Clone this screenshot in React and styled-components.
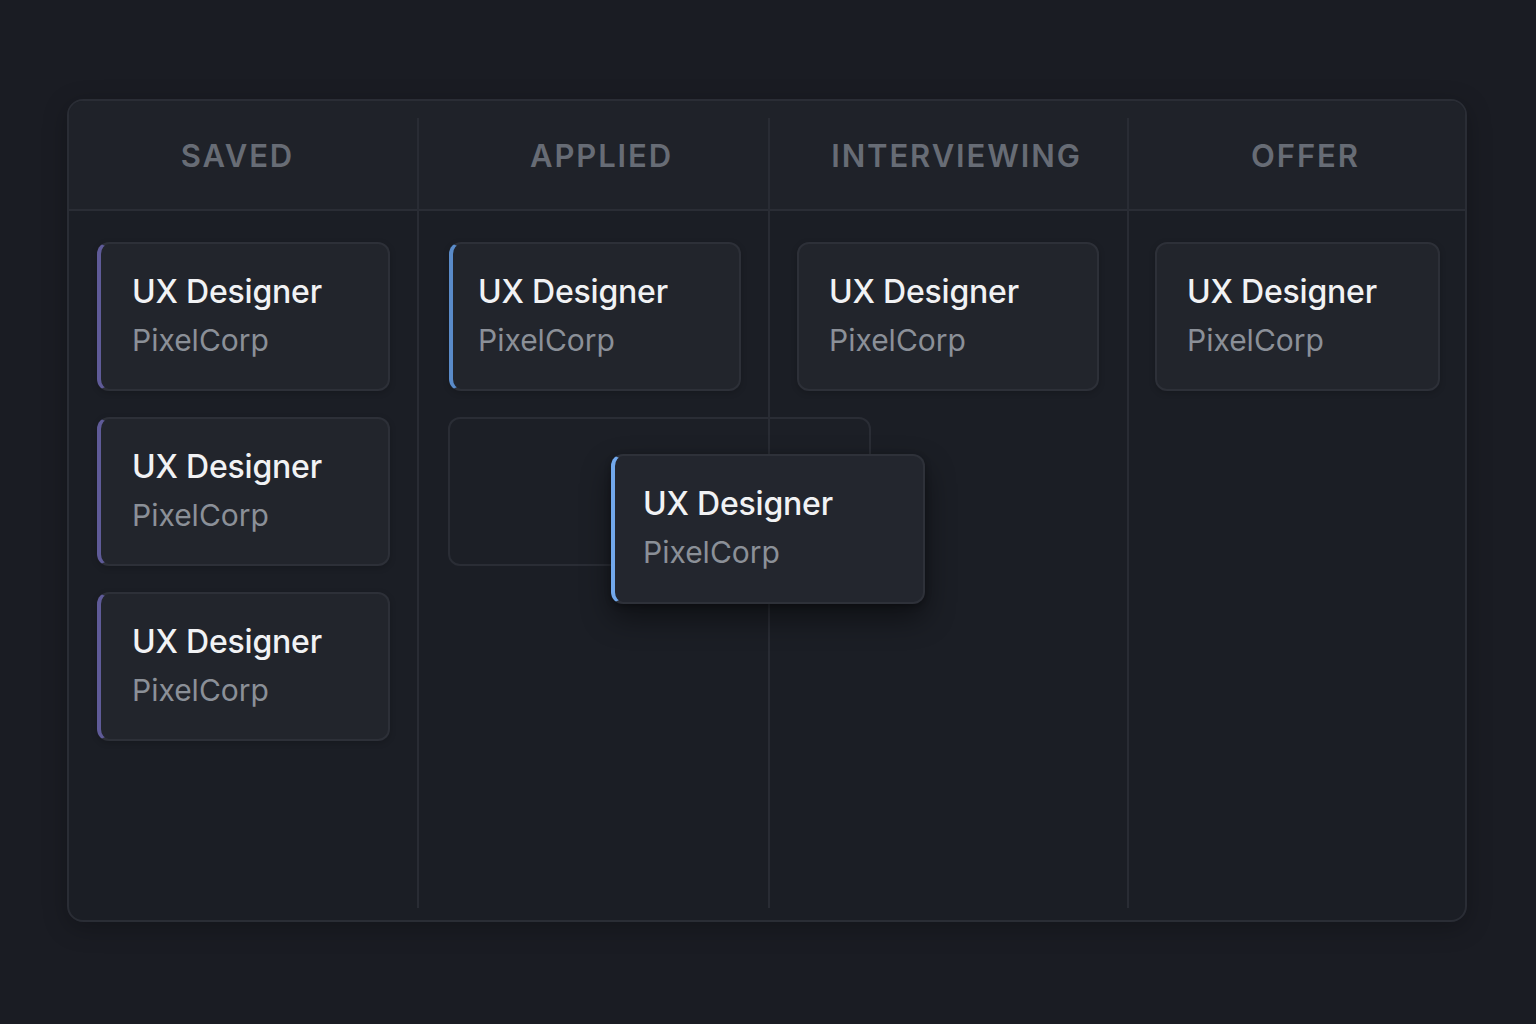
import React from 'react';
import styled, { createGlobalStyle } from 'styled-components';

const GlobalStyle = createGlobalStyle`
  html, body {
    margin: 0;
    padding: 0;
    background: #1a1c23;
  }
  body {
    font-family: Inter, "Noto Sans", "Liberation Sans", sans-serif;
    -webkit-font-smoothing: antialiased;
  }
  * { box-sizing: border-box; }
`;

const Page = styled.main`
  width: 1536px;
  height: 1024px;
  padding: 99px 0 0 67px;
`;

const Board = styled.section`
  position: relative;
  width: 1400px;
  height: 823px;
  display: grid;
  grid-template-columns: 349px 351px 359px 1fr;
  background: #1b1e25;
  border: 2px solid #2a2d35;
  border-radius: 16px;
  box-shadow: 0 6px 24px rgba(0, 0, 0, 0.25);
`;

const Column = styled.div`
  position: relative;
  display: flex;
  flex-direction: column;
  min-width: 0;

  /* column divider, stops short of the board edges */
  &::before {
    content: '';
    display: ${p => (p.$first ? 'none' : 'block')};
    position: absolute;
    left: -1px;
    top: 17px;
    bottom: 12px;
    width: 2px;
    background: #292c34;
  }
`;

const ColumnHeader = styled.header`
  height: 110px;
  display: flex;
  align-items: center;
  justify-content: center;
  padding: 0 ${p => p.$padRight || 0}px 0 ${p => p.$padLeft || 0}px;
  background: #1f2229;
  border-bottom: 2px solid #2a2d35;
  border-radius: ${p => p.$radius || '0'};
  color: #676c75;
  font-size: 31px;
  font-weight: 600;
  letter-spacing: 1.9px;
  text-transform: uppercase;
`;

const ColumnBody = styled.div`
  flex: 1;
  display: flex;
  flex-direction: column;
  gap: 26px;
  padding: 31px ${p => p.$right || 28}px 0 ${p => p.$left || 28}px;
`;

const Card = styled.article`
  position: relative;
  z-index: 1;
  height: 149px;
  padding: 28px 0 0 ${p => p.$pad || 30}px;
  background: #22252c;
  border: 2px solid #2d3038;
  border-left: ${p => (p.$accent ? `4px solid ${p.$accent}` : '2px solid #2d3038')};
  border-radius: 12px;
  box-shadow: 0 2px 6px rgba(0, 0, 0, 0.18);
`;

const DraggedCard = styled(Card)`
  position: absolute;
  z-index: 5;
  left: 542px;
  top: 353px;
  width: 314px;
  height: 150px;
  background: #23262e;
  border-color: #2e3139;
  border-left: 4px solid #72a8ec;
  box-shadow: 0 14px 30px rgba(0, 0, 0, 0.45), 0 2px 6px rgba(0, 0, 0, 0.3);
`;

const DropSlot = styled.div`
  width: 423px;
  height: 149px;
  margin-left: -1px;
  border: 2px solid #2a2d35;
  border-radius: 12px;
  background: rgba(255, 255, 255, 0.008);
`;

const Title = styled.h3`
  margin: 0;
  color: #f1f2f4;
  font-size: 32px;
  font-weight: 500;
  line-height: 40px;
  letter-spacing: -0.2px;
`;

const Company = styled.p`
  margin: 9px 0 0;
  color: #8b9098;
  font-size: 30px;
  font-weight: 400;
  line-height: 38px;
`;

const JobCard = ({ accent, pad }) => (
  <Card $accent={accent} $pad={pad}>
    <Title>UX Designer</Title>
    <Company>PixelCorp</Company>
  </Card>
);

const PURPLE = '#5f5b98';
const BLUE = '#5a8bc9';

export default function App() {
  return (
    <>
      <GlobalStyle />
      <Page>
        <Board>
          <Column $first>
            <ColumnHeader $radius="14px 0 0 0" $padRight={12}>Saved</ColumnHeader>
            <ColumnBody>
              <JobCard accent={PURPLE} pad={31} />
              <JobCard accent={PURPLE} pad={31} />
              <JobCard accent={PURPLE} pad={31} />
            </ColumnBody>
          </Column>

          <Column>
            <ColumnHeader $padLeft={16}>Applied</ColumnHeader>
            <ColumnBody $left={31} $right={28}>
              <JobCard accent={BLUE} pad={25} />
              <DropSlot />
            </ColumnBody>
          </Column>

          <Column>
            <ColumnHeader $padLeft={16}>Interviewing</ColumnHeader>
            <ColumnBody $left={28} $right={29}>
              <JobCard pad={30} />
            </ColumnBody>
          </Column>

          <Column>
            <ColumnHeader $radius="0 14px 0 0" $padLeft={18}>Offer</ColumnHeader>
            <ColumnBody $left={27} $right={25}>
              <JobCard pad={30} />
            </ColumnBody>
          </Column>

          <DraggedCard $pad={28}>
            <Title>UX Designer</Title>
            <Company>PixelCorp</Company>
          </DraggedCard>
        </Board>
      </Page>
    </>
  );
}
